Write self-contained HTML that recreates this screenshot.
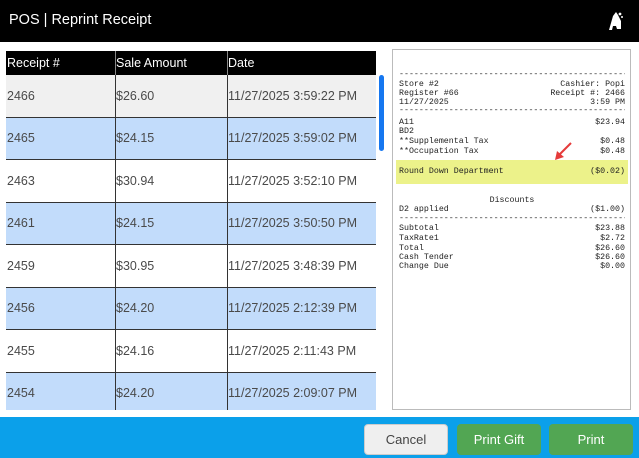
<!DOCTYPE html><html><head><style>
body{margin:0;width:639px;height:458px;overflow:hidden;background:#fff;font-family:"Liberation Sans",sans-serif;position:relative}
.hdr{position:absolute;left:0;top:0;width:639px;height:42px;background:#000;color:#fff}
.hdr span{position:absolute;left:9px;top:12px;font-size:14.5px}
.tbl{position:absolute;left:6px;top:51px;width:370px;height:359px;overflow:hidden;background:#fff}
.row{position:absolute;left:0;width:370px;height:42.5px;border-bottom:1.5px solid #333;box-sizing:border-box;font-size:12.5px;color:#4a4a4a}
.row div,.th div{position:absolute;top:0;height:100%;border-right:1.5px solid #333;box-sizing:border-box;padding-left:1px;display:flex;align-items:center}
.c1{left:0;width:110px}.c2{left:109px;width:113px}.c3{left:221px;width:149px;border-right:none!important}
.th{position:absolute;left:0;top:0;width:370px;height:24px;background:#000;color:#fff;font-size:12.5px}
.th div{border-right:1px solid #888}
.b{background:#c2dcfb}.g{background:#f0f0f0}
.sb{position:absolute;left:379px;top:75px;width:5px;height:76px;background:#1677f0;border-radius:3px}
.rc{position:absolute;left:392px;top:49px;width:239px;height:361px;border:1px solid #bbb;box-sizing:border-box}
.r{position:absolute;left:399px;width:226px;font-family:"Liberation Mono",monospace;font-size:8.3px;color:#222;height:10px;line-height:10px;white-space:pre;overflow:hidden}
.r i{font-style:normal;float:right}
.hl{position:absolute;left:396px;top:160px;width:232px;height:24px;background:#ecf28a}
.bar{position:absolute;left:0;top:417px;width:639px;height:41px;background:#0ba0ea}
.btn{position:absolute;top:424px;height:31px;width:84px;border-radius:4px;font-size:13px;display:flex;align-items:center;justify-content:center;color:#fff;background:#52a653}
</style></head><body>
<div class="hdr"><span>POS | Reprint Receipt</span>
<svg style="position:absolute;left:604px;top:9px" width="22" height="24" viewBox="0 0 22 24"><path d="M5 21 L9 7 L12 3 L14 6 L17 12 L17 20 L13 20 L12 17 L9 17 L8 21 Z" fill="#fff"/><circle cx="16" cy="5" r="1.4" fill="#fff"/><circle cx="18" cy="8" r="1" fill="#fff"/></svg></div>
<div class="tbl">
<div class="th"><div class="c1">Receipt #</div><div class="c2">Sale Amount</div><div class="c3">Date</div></div>
<div class="row g" style="top:24px"><div class="c1">2466</div><div class="c2">$26.60</div><div class="c3">11/27/2025 3:59:22 PM</div></div>
<div class="row b" style="top:66.5px"><div class="c1">2465</div><div class="c2">$24.15</div><div class="c3">11/27/2025 3:59:02 PM</div></div>
<div class="row" style="top:109px"><div class="c1">2463</div><div class="c2">$30.94</div><div class="c3">11/27/2025 3:52:10 PM</div></div>
<div class="row b" style="top:151.5px"><div class="c1">2461</div><div class="c2">$24.15</div><div class="c3">11/27/2025 3:50:50 PM</div></div>
<div class="row" style="top:194px"><div class="c1">2459</div><div class="c2">$30.95</div><div class="c3">11/27/2025 3:48:39 PM</div></div>
<div class="row b" style="top:236.5px"><div class="c1">2456</div><div class="c2">$24.20</div><div class="c3">11/27/2025 2:12:39 PM</div></div>
<div class="row" style="top:279px"><div class="c1">2455</div><div class="c2">$24.16</div><div class="c3">11/27/2025 2:11:43 PM</div></div>
<div class="row b" style="top:321.5px"><div class="c1">2454</div><div class="c2">$24.20</div><div class="c3">11/27/2025 2:09:07 PM</div></div>
</div>
<div class="sb"></div>
<div class="rc"></div>
<div class="hl"></div>
<div class="r" style="top:70px">----------------------------------------------------</div>
<div class="r" style="top:80px">Store #2<i>Cashier: Popi</i></div>
<div class="r" style="top:89px">Register #66<i>Receipt #: 2466</i></div>
<div class="r" style="top:98px">11/27/2025<i>3:59 PM</i></div>
<div class="r" style="top:106px">----------------------------------------------------</div>
<div class="r" style="top:118px">A11<i>$23.94</i></div>
<div class="r" style="top:127px">BD2</div>
<div class="r" style="top:137px">**Supplemental Tax<i>$0.48</i></div>
<div class="r" style="top:147px">**Occupation Tax<i>$0.48</i></div>
<div class="r" style="top:167px">Round Down Department<i>($0.02)</i></div>
<div class="r" style="top:196px;text-align:center">Discounts</div>
<div class="r" style="top:205px">D2 applied<i>($1.00)</i></div>
<div class="r" style="top:214px">----------------------------------------------------</div>
<div class="r" style="top:224px">Subtotal<i>$23.88</i></div>
<div class="r" style="top:234px">TaxRate1<i>$2.72</i></div>
<div class="r" style="top:244px">Total<i>$26.60</i></div>
<div class="r" style="top:253px">Cash Tender<i>$26.60</i></div>
<div class="r" style="top:262px">Change Due<i>$0.00</i></div>
<svg style="position:absolute;left:552px;top:140px" width="22" height="22"><line x1="19" y1="3" x2="6" y2="16" stroke="#e53b3b" stroke-width="2"/><path d="M3 20 L5 11 L12 17 Z" fill="#e53b3b"/></svg>
<div class="bar"></div>
<div class="btn" style="left:364px;background:#efefef;color:#444;border:1px solid #ccc;box-sizing:border-box">Cancel</div>
<div class="btn" style="left:457px">Print Gift</div>
<div class="btn" style="left:549px">Print</div>
</body></html>
